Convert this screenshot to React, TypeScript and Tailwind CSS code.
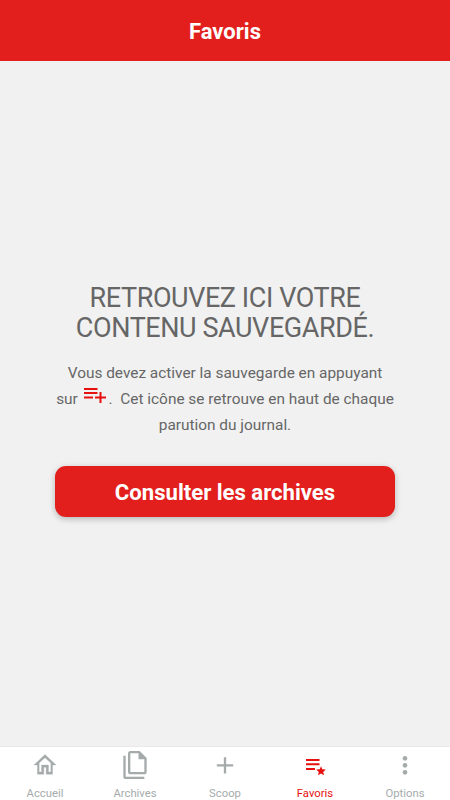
import React from "react";

function PlaylistAdd() {
  return (
    <svg className="mr-[3px] ml-0.5 inline-block h-4 w-[22px] align-[1px]" viewBox="0 0 22 16" fill="#e6100f">
      <path d="M0 1h13.5v2H0zM0 5h13.5v2H0zM0 9.5h9v2H0zM11 9.5h4.5V5h2v4.5H22v2h-4.5V16h-2v-4.5H11z" />
    </svg>
  );
}

const tabs = [
  {
    label: "Accueil",
    icon: (
      <svg className="h-7 w-7" viewBox="0 0 24 24" fill="#a5abab" stroke="#a5abab" strokeWidth=".25">
        <path d="M12 5.69l5 4.5V18h-2v-6H9v6H7v-7.81l5-4.5M12 3L2.5 12h3v8H11v-6h2v6h5.5v-8h3L12 3z" />
      </svg>
    ),
  },
  {
    label: "Archives",
    icon: (
      <svg className="h-7 w-7" viewBox="0 0 24 24" fill="#a5abab">
        <path d="M16 0H8C6.9 0 6 .9 6 2v16c0 1.1.9 2 2 2h12c1.1 0 2-.9 2-2V6l-6-6zm4 18H8V2h7v5h5v11zM4 4H2v18c0 1.1.9 2 2 2h16v-2H4V4z" />
      </svg>
    ),
  },
  {
    label: "Scoop",
    icon: (
      <svg className="h-7 w-7" viewBox="0 0 24 24" fill="#a5abab">
        <path d="M19 13.3h-6v6h-2v-6H5v-2h6v-6h2v6h6v2z" />
      </svg>
    ),
  },
  {
    label: "Favoris",
    active: true,
    icon: (
      <svg className="h-7 w-7" viewBox="0 0 28 28" fill="#e6100f">
        <path d="M5 8h13.5v2H5zM5 12.3h13.500v2H5zM5 17h9v2H5z" />
        <path d="M20 15.200l1.300 3.100 3.500.3-2.600 2.300.8 3.400-3-1.800-3 1.800.8-3.400-2.600-2.300 3.500-.3z" />
      </svg>
    ),
  },
  {
    label: "Options",
    icon: (
      <svg className="h-7 w-7" viewBox="0 0 24 24" fill="#a5abab">
        <circle cx="12" cy="6.3" r="2" />
        <circle cx="12" cy="12.3" r="2" />
        <circle cx="12" cy="18.3" r="2" />
      </svg>
    ),
  },
];

export default function App() {
  return (
    <div className="flex h-[800px] w-[450px] flex-col bg-[#f1f1f1] font-['Roboto',sans-serif] text-[#666]">
      <header className="flex h-[61px] items-center justify-center bg-[#e21f1d] pt-0.5 text-[22px] font-bold text-white">
        Favoris
      </header>
      <main className="flex flex-1 flex-col items-center pt-[222px] text-center">
        <h1 className="text-[27px] leading-[30px] font-normal tracking-[-0.42px]">
          RETROUVEZ ICI VOTRE
          <br />
          CONTENU SAUVEGARDÉ.
        </h1>
        <p className="mt-[17px] text-[15.4px] leading-[26px] whitespace-nowrap">
          Vous devez activer la sauvegarde en appuyant
          <br />
          sur <PlaylistAdd />.&nbsp; Cet icône se retrouve en haut de chaque
          <br />
          parution du journal.
        </p>
        <button className="mt-[28px] h-[51px] w-[340px] rounded-[11px] bg-[#e21f1d] pt-0.5 text-[22.1px] font-bold text-white shadow-[0_2px_6px_rgba(0,0,0,0.25)]">
          Consulter les archives
        </button>
      </main>
      <nav className="grid h-[54px] grid-cols-5 border-t border-[#e9e9e9] bg-white">
        {tabs.map((t) => (
          <div key={t.label} className={`flex flex-col items-center pt-1 text-[11.3px] ${t.active ? "text-[#e6100f]" : "text-[#a5abab]"}`}>
            {t.icon}
            <span className="mt-1.5 leading-[17px]">{t.label}</span>
          </div>
        ))}
      </nav>
    </div>
  );
}
